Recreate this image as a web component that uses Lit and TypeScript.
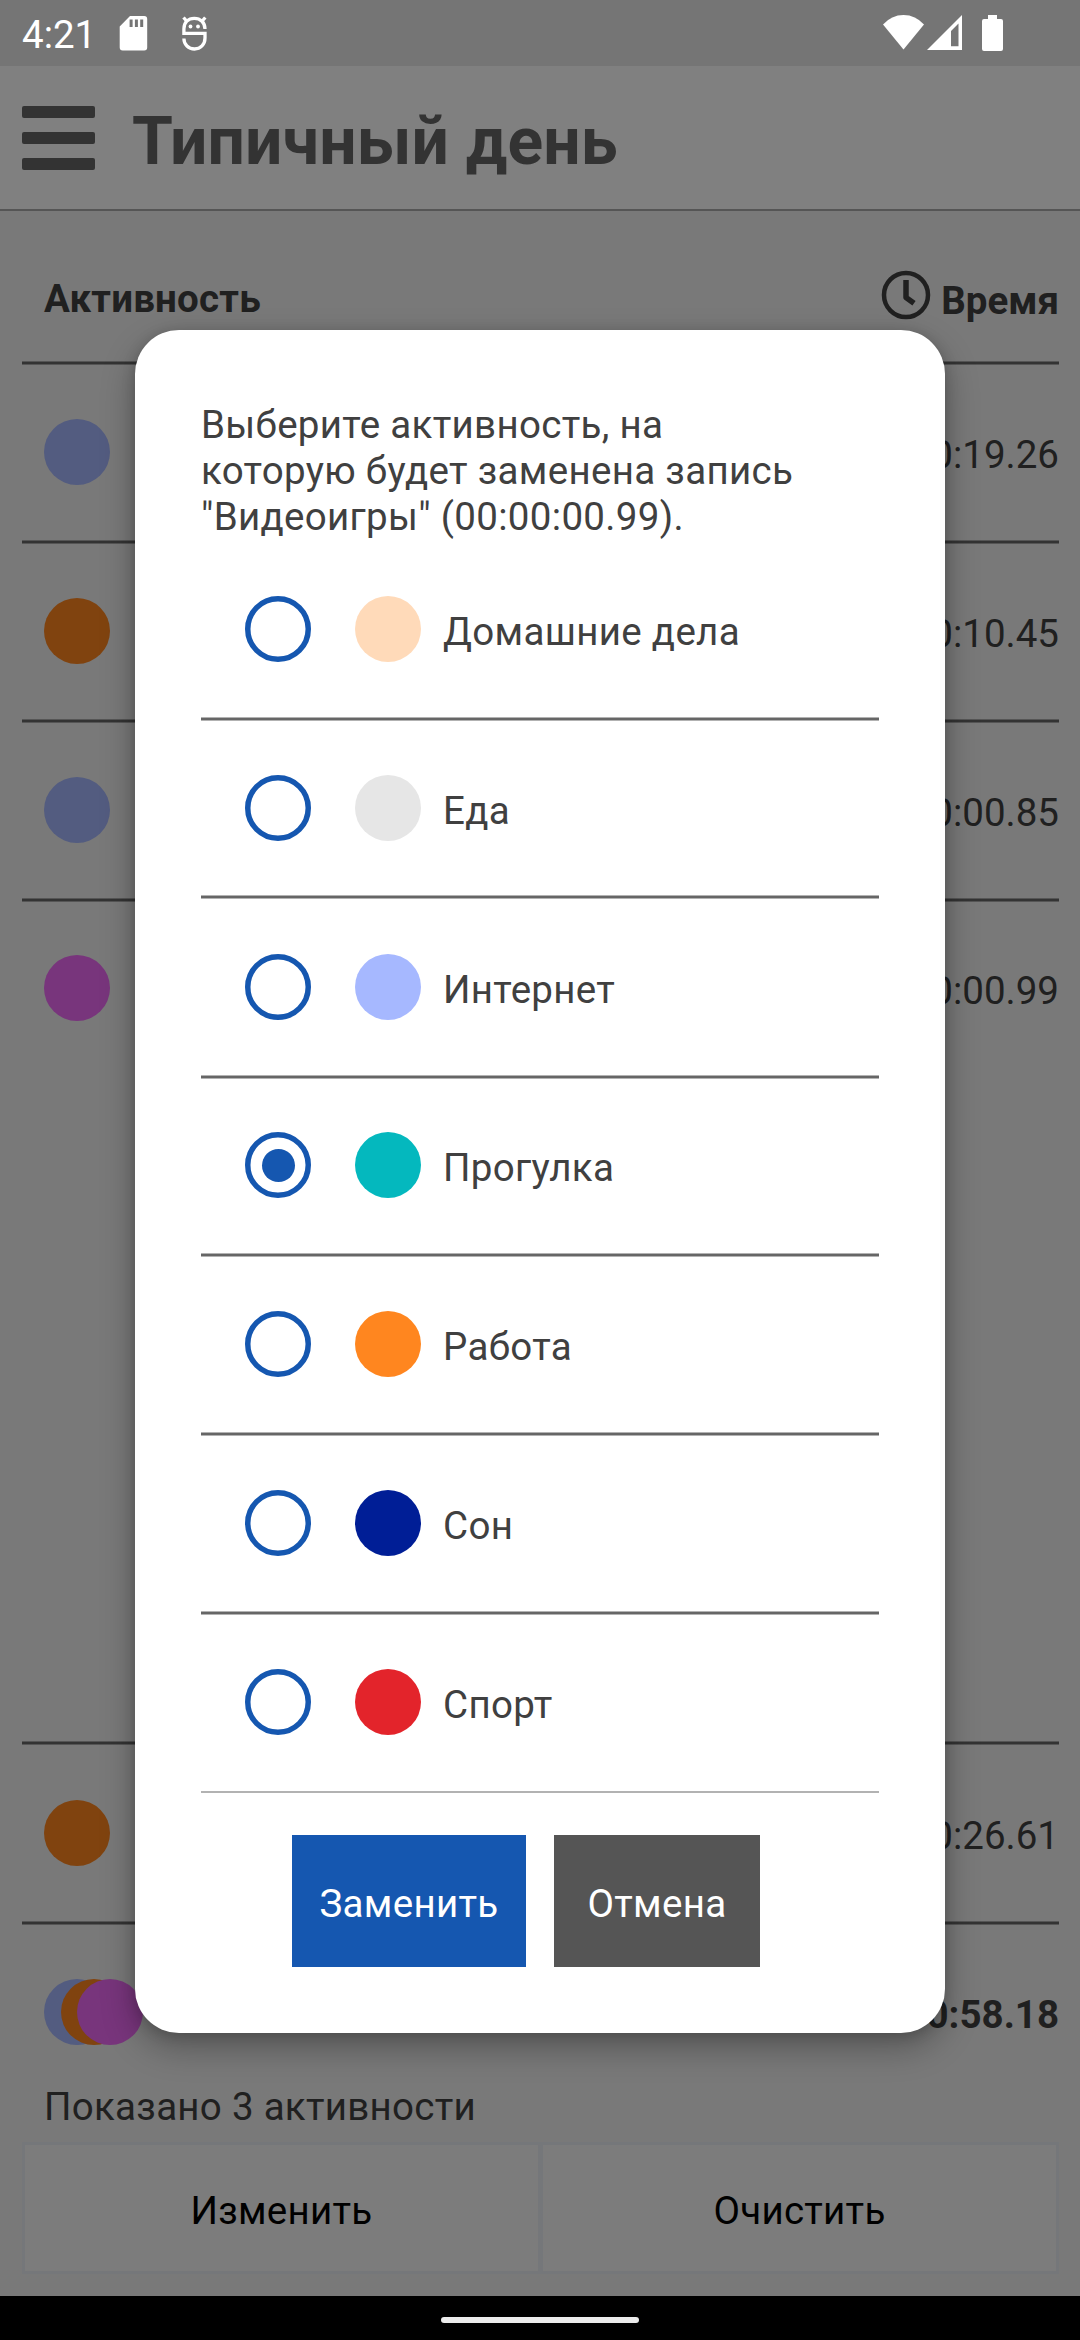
import { LitElement, html, css } from "lit";
import { customElement, property } from "lit/decorators.js";
import { classMap } from "lit/directives/class-map.js";
import { styleMap } from "lit/directives/style-map.js";

interface Activity {
  name: string;
  color: string;
}

interface TimeRow {
  color: string;
  time: string;
}

const OPTIONS: Activity[] = [
  { name: "Домашние дела", color: "#ffdab9" },
  { name: "Еда", color: "#e6e6e6" },
  { name: "Интернет", color: "#a6b8ff" },
  { name: "Прогулка", color: "#04b8be" },
  { name: "Работа", color: "#ff861f" },
  { name: "Сон", color: "#001e96" },
  { name: "Спорт", color: "#e3242b" },
];

const ROWS: TimeRow[] = [
  { color: "#535c80", time: "00:00:19.26" },
  { color: "#80430f", time: "00:00:10.45" },
  { color: "#535c80", time: "00:00:00.85" },
  { color: "#78357c", time: "00:00:00.99" },
];

@customElement("status-bar")
class StatusBar extends LitElement {
  static styles = css`
    :host {
      display: flex;
      align-items: flex-start;
      height: 66px;
      box-sizing: border-box;
      padding: 0 77px 0 22px;
      background: #757575;
      color: #fff;
      font-size: 38.5px;
      line-height: 46px;
    }
    .clock {
      width: 97px;
      padding-top: 12px;
    }
    .spacer {
      flex: 1;
    }
    svg {
      display: block;
      height: 66px;
    }
  `;

  render() {
    return html`
      <span class="clock">4:21</span>
      <svg width="50" viewBox="119 0 50 66" fill="#fff">
        <path
          fill-rule="evenodd"
          d="M130 16H144.200Q147.200 16 147.200 19V47.500Q147.200 50.500 144.200 50.500H122.700Q119.700 50.500 119.700 47.500V26.500ZM129.600 19.500V27H132.600V19.500ZM134.900 19.500V27H137.900V19.500ZM140.200 19.500V27H143.200V19.500Z"
        />
      </svg>
      <svg width="60" viewBox="169 0 60 66" fill="none" stroke="#fff" stroke-width="3.300">
        <path
          d="M205 29C205 22.500 200.500 18.300 194.300 18.300S183.900 22.500 183.900 29V33.300H205V38C205 44.500 200.500 49 194.500 49S183.900 44.500 183.900 38.500"
        />
        <path d="M183.500 17.500L187.500 22M205.300 17.500L201.300 22" />
        <circle cx="190.500" cy="26.500" r="1.900" fill="#fff" stroke="none" />
        <circle cx="198" cy="26.500" r="1.900" fill="#fff" stroke="none" />
      </svg>
      <span class="spacer"></span>
      <svg width="45" viewBox="882 0 45 66" fill="#fff">
        <path d="M883 24.500Q891.500 15 903.500 15T924 24.500L903.500 49.500Z" />
      </svg>
      <svg width="55" viewBox="927 0 55 66" fill="#fff">
        <path fill-rule="evenodd" d="M927 50L962 15V50ZM951 31V46.300H958.500V23.500Z" />
      </svg>
      <svg width="21" viewBox="982 0 21 66" fill="#fff">
        <path
          d="M988 15H997V19H1001Q1003 19 1003 21V49Q1003 51 1001 51H984Q982 51 982 49V21Q982 19 984 19H988Z"
        />
      </svg>
    `;
  }
}

@customElement("app-header")
class AppHeader extends LitElement {
  static styles = css`
    :host {
      display: flex;
      height: 145px;
      box-sizing: border-box;
      padding: 0 22px;
      gap: 37px;
      background: #808080;
      border-bottom: 2px solid #555;
      color: #333;
    }
    .menu {
      display: flex;
      flex-direction: column;
      gap: 14px;
      width: 73px;
      padding-top: 40px;
    }
    .bar {
      height: 12px;
      border-radius: 2px;
      background: #333;
    }
    .title {
      font-size: 66px;
      font-weight: 700;
      line-height: 78px;
      letter-spacing: 0.15px;
      padding-top: 37px;
      white-space: nowrap;
    }
  `;

  render() {
    return html`
      <div class="menu">
        <span class="bar"></span><span class="bar"></span><span class="bar"></span>
      </div>
      <div class="title">Типичный день</div>
    `;
  }
}

@customElement("time-table")
class TimeTable extends LitElement {
  static styles = css`
    :host {
      display: block;
      padding: 0 21px 0 22px;
      color: #202020;
      font-size: 38.5px;
      line-height: 46px;
    }
    .head {
      display: flex;
      justify-content: space-between;
      height: 150px;
      font-weight: 700;
      padding-left: 22px;
    }
    .head-name {
      padding-top: 65px;
      letter-spacing: 0.2px;
    }
    .head-time {
      display: flex;
      gap: 10px;
    }
    .head-label {
      padding-top: 67px;
    }
    .clock {
      display: block;
      width: 50px;
      height: 50px;
      margin-top: 59px;
    }
    .rule {
      height: 2px;
      background: #333;
      border: solid #555;
      border-width: 1px 0;
    }
    .row {
      display: flex;
      align-items: center;
      justify-content: space-between;
      box-sizing: border-box;
      height: 175px;
      padding: 0 0 1px 22px;
    }
    .list .row:last-child {
      height: 173px;
    }
    .row.foot {
      height: 176px;
      padding-bottom: 0;
    }
    .row.total {
      height: 174px;
      padding-bottom: 0;
      font-weight: 700;
    }
    .list {
      height: 1380px;
    }
    .dot {
      width: 66px;
      height: 66px;
      border-radius: 50%;
    }
    .dots {
      display: flex;
    }
    .dots .dot + .dot {
      margin-left: -49.5px;
    }
    .time {
      padding-top: 6px;
    }
  `;

  private row(r: TimeRow) {
    return html`
      <div class="rule"></div>
      <div class="row">
        <span class="dot" style=${styleMap({ background: r.color })}></span>
        <span class="time">${r.time}</span>
      </div>
    `;
  }

  render() {
    return html`
      <div class="head">
        <span class="head-name">Активность</span>
        <span class="head-time">
          <svg class="clock" viewBox="0 0 50 50" fill="none" stroke="#202020">
            <circle cx="25" cy="25" r="22" stroke-width="4.500" />
            <path d="M25 10V27.500L33 33.200" stroke-width="5.500" stroke-linejoin="round" />
          </svg>
          <span class="head-label">Время</span>
        </span>
      </div>
      <div class="list">${ROWS.map((r) => this.row(r))}</div>
      <div class="rule"></div>
      <div class="row foot">
        <span class="dot" style=${styleMap({ background: "#80430f" })}></span>
        <span class="time">00:00:26.61</span>
      </div>
      <div class="rule"></div>
      <div class="row total">
        <span class="dots">
          ${["#535c80", "#80430f", "#78357c"].map(
            (c) => html`<span class="dot" style=${styleMap({ background: c })}></span>`
          )}
        </span>
        <span class="time">00:00:58.18</span>
      </div>
    `;
  }
}

@customElement("table-footer")
class TableFooter extends LitElement {
  static styles = css`
    :host {
      display: block;
      height: 197px;
      padding: 0 21px 0 22px;
      color: #202020;
      font-size: 38.5px;
      line-height: 46px;
      letter-spacing: 0.28px;
    }
    .summary {
      height: 43px;
      padding-left: 22px;
      margin-top: -15px;
    }
    .actions {
      display: flex;
      height: 132px;
      box-sizing: border-box;
      padding: 3px;
      gap: 5px;
      background: #75777a;
      margin-top: 15px;
    }
    .action {
      flex: 1;
      display: flex;
      align-items: center;
      justify-content: center;
      background: #7c7c7c;
      color: #000;
    }
    .action-label {
      padding-top: 5px;
    }
  `;

  render() {
    return html`
      <div class="summary">Показано 3 активности</div>
      <div class="actions">
        <div class="action"><span class="action-label">Изменить</span></div>
        <div class="action"><span class="action-label">Очистить</span></div>
      </div>
    `;
  }
}

@customElement("replace-dialog")
class ReplaceDialog extends LitElement {
  @property() selected = "";

  static styles = css`
    :host {
      display: block;
      box-sizing: border-box;
      width: 810px;
      height: 1703px;
      padding: 72px 66px 66px;
      border-radius: 44px;
      background: #fff;
      box-shadow: 0 14px 34px rgba(0, 0, 0, 0.3), 0 2px 14px rgba(0, 0, 0, 0.16);
      color: #404040;
      font-size: 38.5px;
      line-height: 46px;
      letter-spacing: 0.32px;
    }
    .message {
      height: 136px;
      white-space: nowrap;
    }
    .option {
      height: 178.75px;
    }
    .rule {
      height: 2px;
      background: #666;
      border: solid #b2b2b2;
      border-width: 1px 0;
    }
    .rule.blank {
      visibility: hidden;
    }
    .option:nth-child(3) .rule,
    .option:nth-child(7) .rule {
      margin: -0.25px 0 0.25px;
    }
    .option:nth-child(4) .rule {
      margin: 0.5px 0 -0.5px;
    }
    .choice {
      display: flex;
      align-items: center;
      height: 66px;
      padding: 54.1px 0 0 44px;
    }
    .radio {
      display: block;
      width: 66px;
      height: 66px;
      margin-right: 44px;
    }
    .mark {
      fill: none;
    }
    .mark.on {
      fill: #1557b0;
    }
    .swatch {
      width: 66px;
      height: 66px;
      border-radius: 50%;
      margin-right: 22px;
    }
    .name {
      padding-top: 6px;
    }
    .end {
      height: 2px;
      margin-top: 1.75px;
      background: #b2b2b2;
    }
    .buttons {
      display: flex;
      gap: 28px;
      margin: 42px 0 0 91px;
    }
    .button {
      display: flex;
      align-items: center;
      justify-content: center;
      height: 132px;
      width: 206px;
      background: #555;
      color: #fff;
    }
    .button.primary {
      width: 234px;
      background: #1557b0;
    }
    .label {
      padding-top: 5px;
    }
  `;

  render() {
    return html`
      <div class="message">
        Выберите активность, на<br />которую будет заменена запись<br />"Видеоигры" (00:00:00.99).
      </div>
      <div class="options">
        ${OPTIONS.map(
          (o, i) => html`
            <div class="option">
              <div class=${classMap({ rule: true, blank: i === 0 })}></div>
              <div class="choice">
                <svg class="radio" viewBox="0 0 66 66">
                  <circle cx="33" cy="33" r="30.250" fill="none" stroke="#1557b0" stroke-width="5.500" />
                  <circle
                    class=${classMap({ mark: true, on: o.name === this.selected })}
                    cx="33.500"
                    cy="33.500"
                    r="16.500"
                  />
                </svg>
                <span class="swatch" style=${styleMap({ background: o.color })}></span>
                <span class="name">${o.name}</span>
              </div>
            </div>
          `
        )}
      </div>
      <div class="end"></div>
      <div class="buttons">
        <div class="button primary"><span class="label">Заменить</span></div>
        <div class="button"><span class="label">Отмена</span></div>
      </div>
    `;
  }
}

@customElement("app-root")
class AppRoot extends LitElement {
  static styles = css`
    :host {
      display: flex;
      flex-direction: column;
      position: relative;
      width: 1080px;
      height: 2340px;
      overflow: hidden;
      background: #797979;
      font-family: Roboto, "Noto Sans", sans-serif;
    }
    .nav {
      display: flex;
      justify-content: center;
      height: 44px;
      background: #000;
    }
    .pill {
      width: 198px;
      height: 6px;
      margin-top: 21px;
      border-radius: 3px;
      background: #ebebeb;
    }
    .overlay {
      position: absolute;
      top: 330px;
      left: 135px;
    }
    .body {
      flex: 1;
    }
  `;

  render() {
    return html`
      <status-bar></status-bar>
      <app-header></app-header>
      <time-table class="body"></time-table>
      <table-footer></table-footer>
      <div class="nav"><span class="pill"></span></div>
      <replace-dialog class="overlay" selected="Прогулка"></replace-dialog>
    `;
  }
}
